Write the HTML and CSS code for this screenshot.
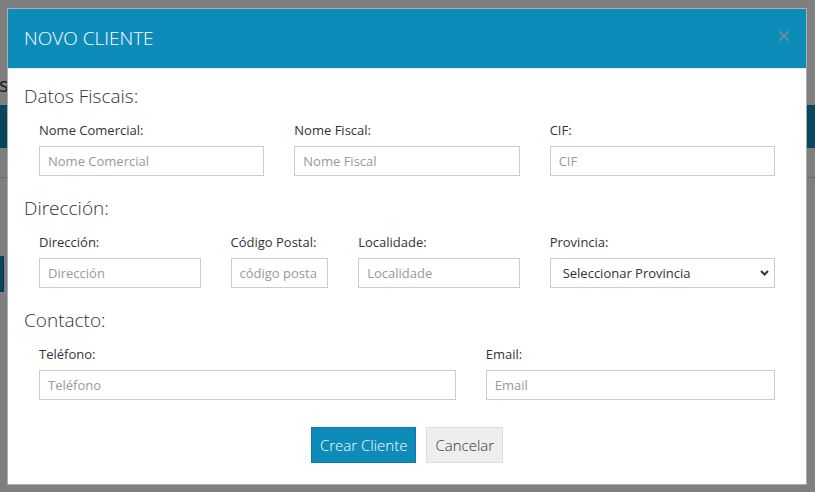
FILE: index.html
```html
<!DOCTYPE html>
<html lang="es">
<head>
<meta charset="utf-8">
<title>Novo Cliente</title>
<link rel="stylesheet" href="styles.css">
</head>
<body>
<div class="page">
  <div class="page-title">s</div>
  <div class="navbar"></div>
  <div class="toolbar"></div>
  <div class="page-actions"><span class="page-btn"></span></div>
</div>

<div class="overlay"></div>

<div class="modal">
  <div class="modal-header">
    <h3 class="modal-title">NOVO CLIENTE</h3>
    <span class="close" aria-label="Cerrar">
      <svg width="10" height="10" viewBox="0 0 10 10"><path d="M1 1 L9 9 M9 1 L1 9" stroke="currentColor" stroke-width="2.4" stroke-linecap="square" fill="none"/></svg>
    </span>
  </div>
  <div class="modal-body">
    <section class="section">
      <h4 class="section-title">Datos Fiscais:</h4>
      <div class="fields">
        <div class="field span-4"><label>Nome Comercial:</label><input type="text" placeholder="Nome Comercial"></div>
        <div class="field span-4"><label>Nome Fiscal:</label><input type="text" placeholder="Nome Fiscal"></div>
        <div class="field span-4"><label>CIF:</label><input type="text" placeholder="CIF"></div>
      </div>
    </section>
    <section class="section">
      <h4 class="section-title">Dirección:</h4>
      <div class="fields">
        <div class="field span-3"><label>Dirección:</label><input type="text" placeholder="Dirección"></div>
        <div class="field span-2"><label>Código Postal:</label><input type="text" placeholder="código postal"></div>
        <div class="field span-3"><label>Localidade:</label><input type="text" placeholder="Localidade"></div>
        <div class="field span-4"><label>Provincia:</label>
          <div class="select-wrap">
            <select><option>Seleccionar Provincia</option></select>
            <svg class="chevron" width="9" height="6" viewBox="0 0 9 6"><path d="M1 1 L4.5 4.5 L8 1" stroke="#333" stroke-width="2" fill="none"/></svg>
          </div>
        </div>
      </div>
    </section>
    <section class="section">
      <h4 class="section-title">Contacto:</h4>
      <div class="fields">
        <div class="field span-7"><label>Teléfono:</label><input type="text" placeholder="Teléfono"></div>
        <div class="field span-5"><label>Email:</label><input type="text" placeholder="Email"></div>
      </div>
    </section>
    <div class="modal-footer">
      <button class="btn btn-primary" type="button">Crear Cliente</button>
      <button class="btn btn-default" type="button">Cancelar</button>
    </div>
  </div>
</div>
</body>
</html>
```

FILE: styles.css
```css
* { box-sizing: border-box; }

html, body {
  margin: 0;
  height: 100%;
}

body {
  background: #fff;
  font-family: "Open Sans", "Liberation Sans", sans-serif;
  color: #333;
  overflow: hidden;
}

/* background page (dimmed) */
.page {
  padding-top: 72px;
}
.page-title {
  font-size: 20px;
  line-height: 26px;
  color: #333;
  margin-left: -1px;
}
.navbar {
  margin-top: 7px;
  height: 43px;
  background: #0e8cb9;
}
.toolbar {
  height: 30px;
  border-bottom: 1px solid #ddd;
}
.page-actions {
  margin-top: 78px;
  width: 4px;
  display: flex;
  justify-content: flex-end;
}
.page-btn {
  flex: none;
  width: 60px;
  height: 36px;
  background: #0e8cb9;
  border: 1px solid #0b6f93;
}

.overlay {
  position: fixed;
  inset: 0;
  background: rgba(0, 0, 0, 0.5);
}

/* modal */
.modal {
  position: fixed;
  left: 7px;
  top: 8px;
  width: 800px;
  background: #fff;
  border: 1px solid rgba(0, 0, 0, 0.32);
}

.modal-header {
  position: relative;
  background: #0e8cb9;
  padding: 15px 16px;
  border-bottom: 1px solid #e5e5e5;
}
.modal-title {
  margin: 0;
  font-size: 19px;
  line-height: 29px;
  font-weight: 300;
  color: #fff;
}
.close {
  position: absolute;
  right: 17px;
  top: 22px;
  color: #5b8ea3;
  display: block;
  line-height: 0;
}

.modal-body {
  padding: 16px 31px 21px 16px;
}

.section + .section {
  margin-top: 21px;
}
.section-title {
  margin: 0 0 13px;
  font-size: 19px;
  line-height: 22px;
  font-weight: 300;
  color: #333;
}

.fields {
  display: grid;
  grid-template-columns: repeat(12, 1fr);
  column-gap: 30px;
  padding-left: 15px;
}
.span-2 { grid-column: span 2; }
.span-3 { grid-column: span 3; }
.span-4 { grid-column: span 4; }
.span-5 { grid-column: span 5; }
.span-7 { grid-column: span 7; }

.field {
  min-width: 0;
}
.field label {
  display: block;
  font-size: 13px;
  line-height: 20px;
  margin-bottom: 6px;
  color: #333;
  white-space: nowrap;
}
.field input,
.field select {
  display: block;
  width: 100%;
  height: 30px;
  border: 1px solid #ccc;
  border-radius: 0;
  background: #fff;
  font-family: "Open Sans", "Liberation Sans", sans-serif;
  font-size: 13px;
  color: #333;
  outline: none;
  margin: 0;
}
.field input {
  padding: 0 10px 0 8px;
}
.field input::placeholder {
  color: #999;
  opacity: 1;
}

.select-wrap {
  position: relative;
}
.field select {
  appearance: none;
  -webkit-appearance: none;
  padding: 0 24px 0 12px;
  color: #333;
}
.chevron {
  position: absolute;
  right: 6px;
  top: 12px;
  pointer-events: none;
}

.modal-footer {
  margin-top: 27px;
  display: flex;
  justify-content: center;
  gap: 10px;
  padding-left: 15px;
}
.btn {
  height: 36px;
  padding: 0 8px;
  font-family: "Open Sans", "Liberation Sans", sans-serif;
  font-size: 15px;
  font-weight: 300;
  line-height: 20px;
  border-radius: 0;
  cursor: pointer;
}
.btn-primary {
  background: #0e8cb9;
  border: 1px solid #0b79a1;
  color: #fff;
}
.btn-default {
  background: #eee;
  border: 1px solid #ddd;
  color: #333;
}
```
